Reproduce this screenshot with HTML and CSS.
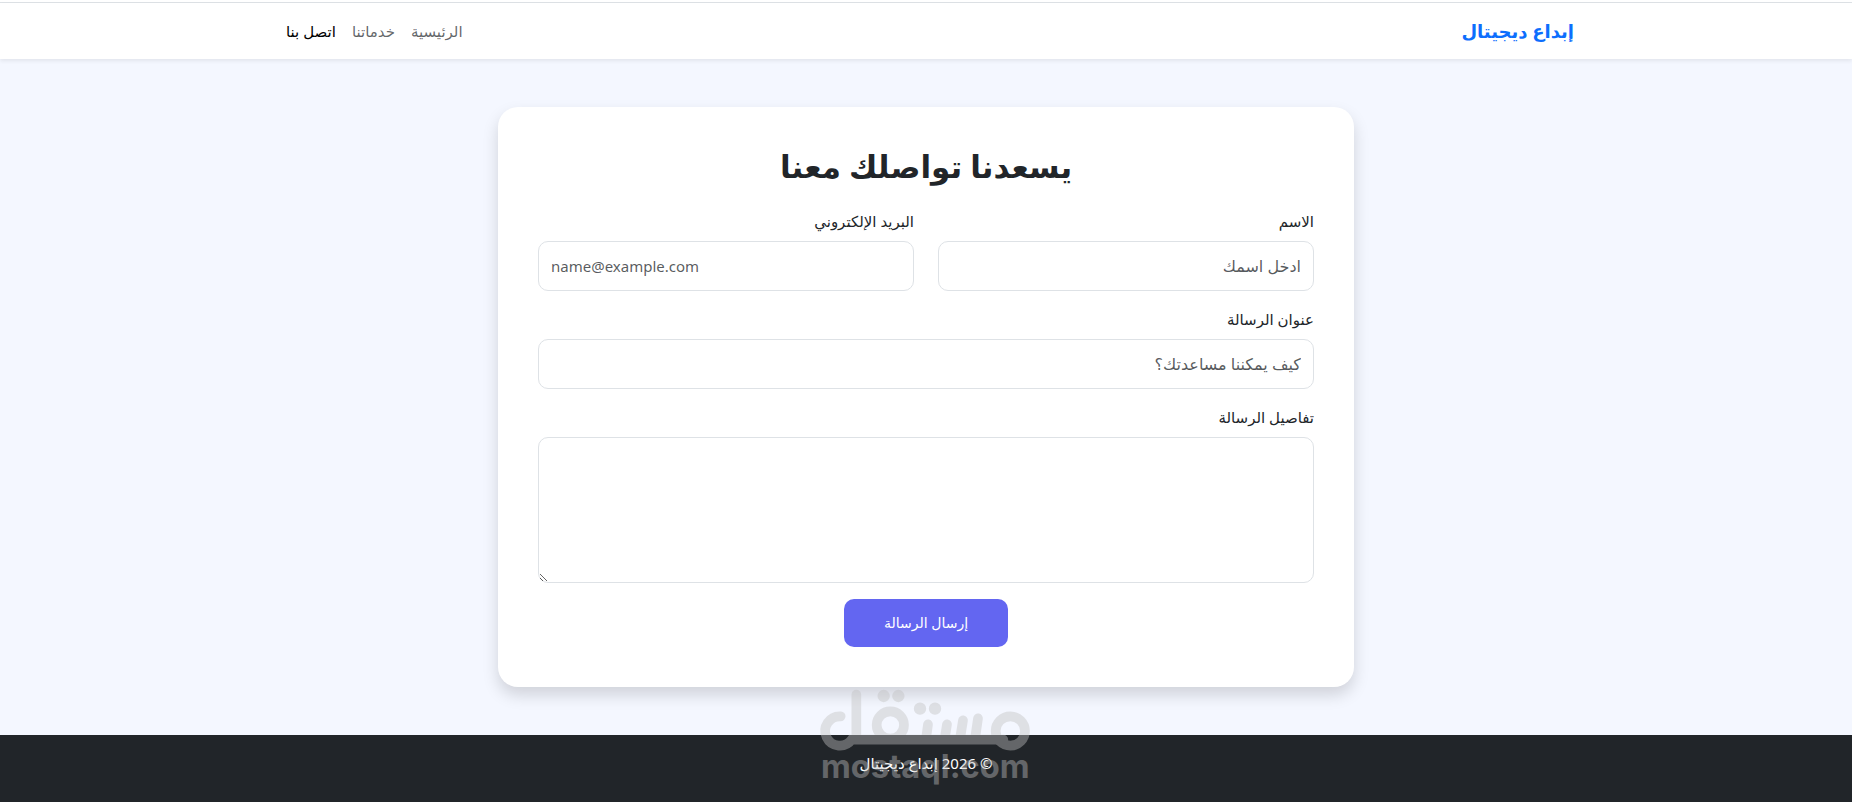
FILE: index.html
```html
<!DOCTYPE html>
<html lang="ar" dir="rtl">
<head>
<meta charset="utf-8">
<meta name="viewport" content="width=device-width, initial-scale=1">
<title>اتصل بنا | إبداع ديجيتال</title>
<link rel="stylesheet" href="styles.css">
</head>
<body>
<div class="top-line"></div>
<header class="navbar">
  <div class="container navbar-inner">
    <a class="brand" href="#">إبداع ديجيتال</a>
    <nav class="nav">
      <a class="nav-link" href="#">الرئيسية</a>
      <a class="nav-link" href="#">خدماتنا</a>
      <a class="nav-link active" href="#" aria-current="page">اتصل بنا</a>
    </nav>
  </div>
</header>
<main class="main">
  <section class="card">
    <h1 class="title">يسعدنا تواصلك معنا</h1>
    <form class="form">
      <div class="row">
        <div class="field">
          <label class="label" for="name">الاسم</label>
          <input class="control" id="name" type="text" placeholder="ادخل اسمك">
        </div>
        <div class="field">
          <label class="label" for="email">البريد الإلكتروني</label>
          <input class="control latin" id="email" type="email" dir="ltr" placeholder="name@example.com">
        </div>
      </div>
      <div class="field">
        <label class="label" for="subject">عنوان الرسالة</label>
        <input class="control" id="subject" type="text" placeholder="كيف يمكننا مساعدتك؟">
      </div>
      <div class="field">
        <label class="label" for="message">تفاصيل الرسالة</label>
        <textarea class="control message" id="message"></textarea>
      </div>
      <button class="submit" type="submit">إرسال الرسالة</button>
    </form>
  </section>
</main>
<footer class="footer">
  <p class="copyright">© 2026 إبداع ديجيتال</p>
  <svg class="watermark" viewBox="90 25 633 300" direction="ltr" role="img" aria-label="mostaql.com">
    <g class="mark">
      <circle cx="661" cy="154" r="44"/>
      <path d="M152 110A44 44 0 1 0 185 180H640"/>
      <path d="M199 45V166"/>
      <circle cx="301" cy="136" r="41"/>
      <path d="M414 134L408 178M471 134L464 178M519 122L510 178M564 116L555 178"/>
      <path class="dots" d="M281 49h.1M325 49h.1M390 87h.1M435 87h.1"/>
    </g>
    <text class="mark-text" x="406" y="296" text-anchor="middle">mostaql.com</text>
  </svg>
</footer>
</body>
</html>
```

FILE: styles.css
```css
* { box-sizing: border-box; }

body {
  margin: 0;
  min-height: 100vh;
  display: flex;
  flex-direction: column;
  background: #f4f7ff;
  color: #212529;
  font: 15px/24px "Noto Sans", "DejaVu Sans", sans-serif;
}

.top-line {
  height: 3px;
  background: #fff;
  border-bottom: 1px solid #dee2e6;
}

.navbar {
  background: #fff;
  padding: 8px 0;
  box-shadow: 0 2px 4px rgba(0, 0, 0, .075);
}

.container {
  width: 100%;
  max-width: 1320px;
  margin: 0 auto;
  padding: 0 12px;
}

.navbar-inner {
  display: flex;
  align-items: center;
  justify-content: space-between;
}

.brand {
  color: #0d6efd;
  font-size: 18px;
  font-weight: 700;
  text-decoration: none;
}

.nav { display: flex; }

.nav-link {
  padding: 8px;
  color: rgba(33, 37, 41, .7);
  text-decoration: none;
}

.nav-link.active { color: #000; }

.main { padding: 48px 12px; }

.card {
  max-width: 856px;
  margin: 0 auto;
  padding: 40px;
  background: #fff;
  border-radius: 20px;
  box-shadow: 0 8px 16px rgba(0, 0, 0, .15);
}

.title {
  margin: 0 0 24px;
  font-size: 31px;
  font-weight: 700;
  line-height: 38px;
  text-align: center;
}

.form {
  display: flex;
  flex-direction: column;
  gap: 16px;
}

.row {
  display: grid;
  grid-template-columns: 1fr 1fr;
  gap: 24px;
}

.label {
  display: block;
  margin-bottom: 8px;
}

.control {
  display: block;
  width: 100%;
  height: 50px;
  padding: 12px;
  border: 1px solid #dee2e6;
  border-radius: 10px;
  background: #fff;
  color: inherit;
  font: inherit;
  font-size: 16px;
}

.control.latin { font-size: 15px; }

.control::placeholder {
  color: rgba(33, 37, 41, .75);
  opacity: 1;
}

.message {
  height: 146px;
  resize: vertical;
}

.submit {
  align-self: center;
  padding: 12px 40px;
  border: 0;
  border-radius: 10px;
  background: #6366f1;
  color: #fff;
  font: inherit;
  font-size: 14px;
}

.footer {
  position: relative;
  flex: 1;
  padding: 16px;
  background: #212529;
  color: #fff;
  text-align: center;
}

.copyright { margin: 0; }

.watermark {
  position: absolute;
  top: -47px;
  left: 50%;
  width: 211px;
  height: 100px;
  margin-left: -106px;
  overflow: visible;
  opacity: .42;
  pointer-events: none;
}

.mark {
  fill: none;
  stroke: #c1c1c1;
  stroke-width: 29;
  stroke-linecap: round;
}

.dots { stroke-width: 37; }

.mark-text {
  fill: #c1c1c1;
  font: 700 98px Inter, sans-serif;
}
```
